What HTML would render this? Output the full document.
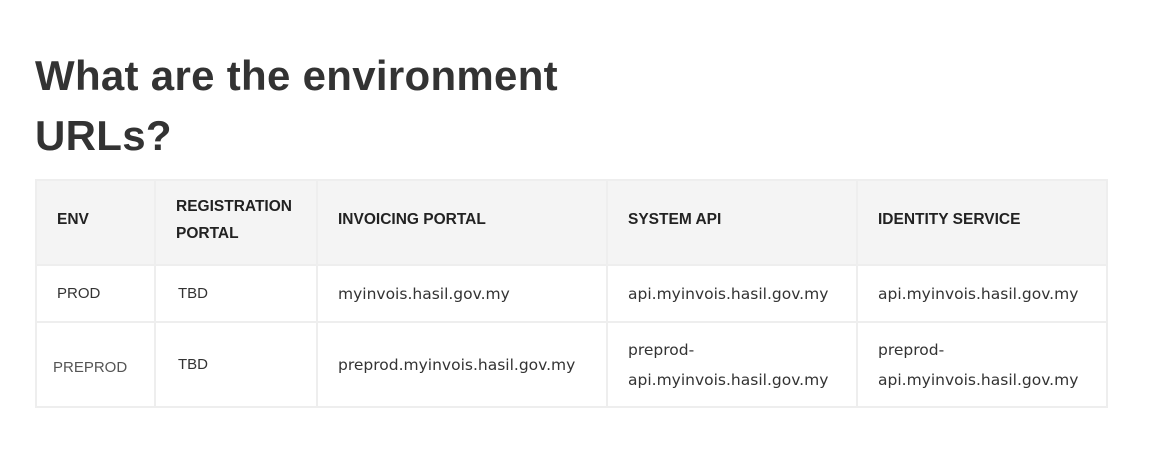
<!DOCTYPE html>
<html><head><style>
body{margin:0;background:#fff;width:1149px;height:471px;overflow:hidden;font-family:"DejaVu Sans","Liberation Sans",sans-serif;color:#333}
h1{position:absolute;left:35px;top:46px;margin:0;font:bold 42px/60px "Liberation Sans",sans-serif;color:#333;letter-spacing:0.3px}
table{position:absolute;left:35px;top:179px;border-collapse:collapse;width:1073px;table-layout:fixed}
td,th{border:2px solid #eee;text-align:left;vertical-align:middle;padding:0 0 0 20px;box-sizing:border-box}
th{background:#f4f4f4;font:bold 15.5px/27px "Liberation Sans",sans-serif;color:#222;height:85px;padding-bottom:6px}
td{font-size:15.5px;line-height:30px;color:#333}
tr.r1 td{height:57px}
tr.r2 td{height:85px}
.c{font-family:"Liberation Sans",sans-serif;font-size:15px}
.two{display:block;line-height:30px;height:60px;overflow:visible}
.two span{display:block;height:30px;line-height:30px}
</style></head><body>
<h1>What are the environment<br>URLs?</h1>
<table>
<tr><th style="width:119px">ENV</th><th style="width:162px">REGISTRATION<br>PORTAL</th><th style="width:290px">INVOICING PORTAL</th><th style="width:250px">SYSTEM API</th><th>IDENTITY SERVICE</th></tr>
<tr class="r1"><td class="c">PROD</td><td class="c" style="padding-left:22px">TBD</td><td>myinvois.hasil.gov.my</td><td>api.myinvois.hasil.gov.my</td><td>api.myinvois.hasil.gov.my</td></tr>
<tr class="r2"><td class="c" style="padding-left:16px;padding-top:6px;color:#555">PREPROD</td><td class="c" style="padding-left:22px">TBD</td><td>preprod.myinvois.hasil.gov.my</td><td><div class="two"><span>preprod-</span><span>api.myinvois.hasil.gov.my</span></div></td><td><div class="two"><span>preprod-</span><span>api.myinvois.hasil.gov.my</span></div></td></tr>
</table>
</body></html>
